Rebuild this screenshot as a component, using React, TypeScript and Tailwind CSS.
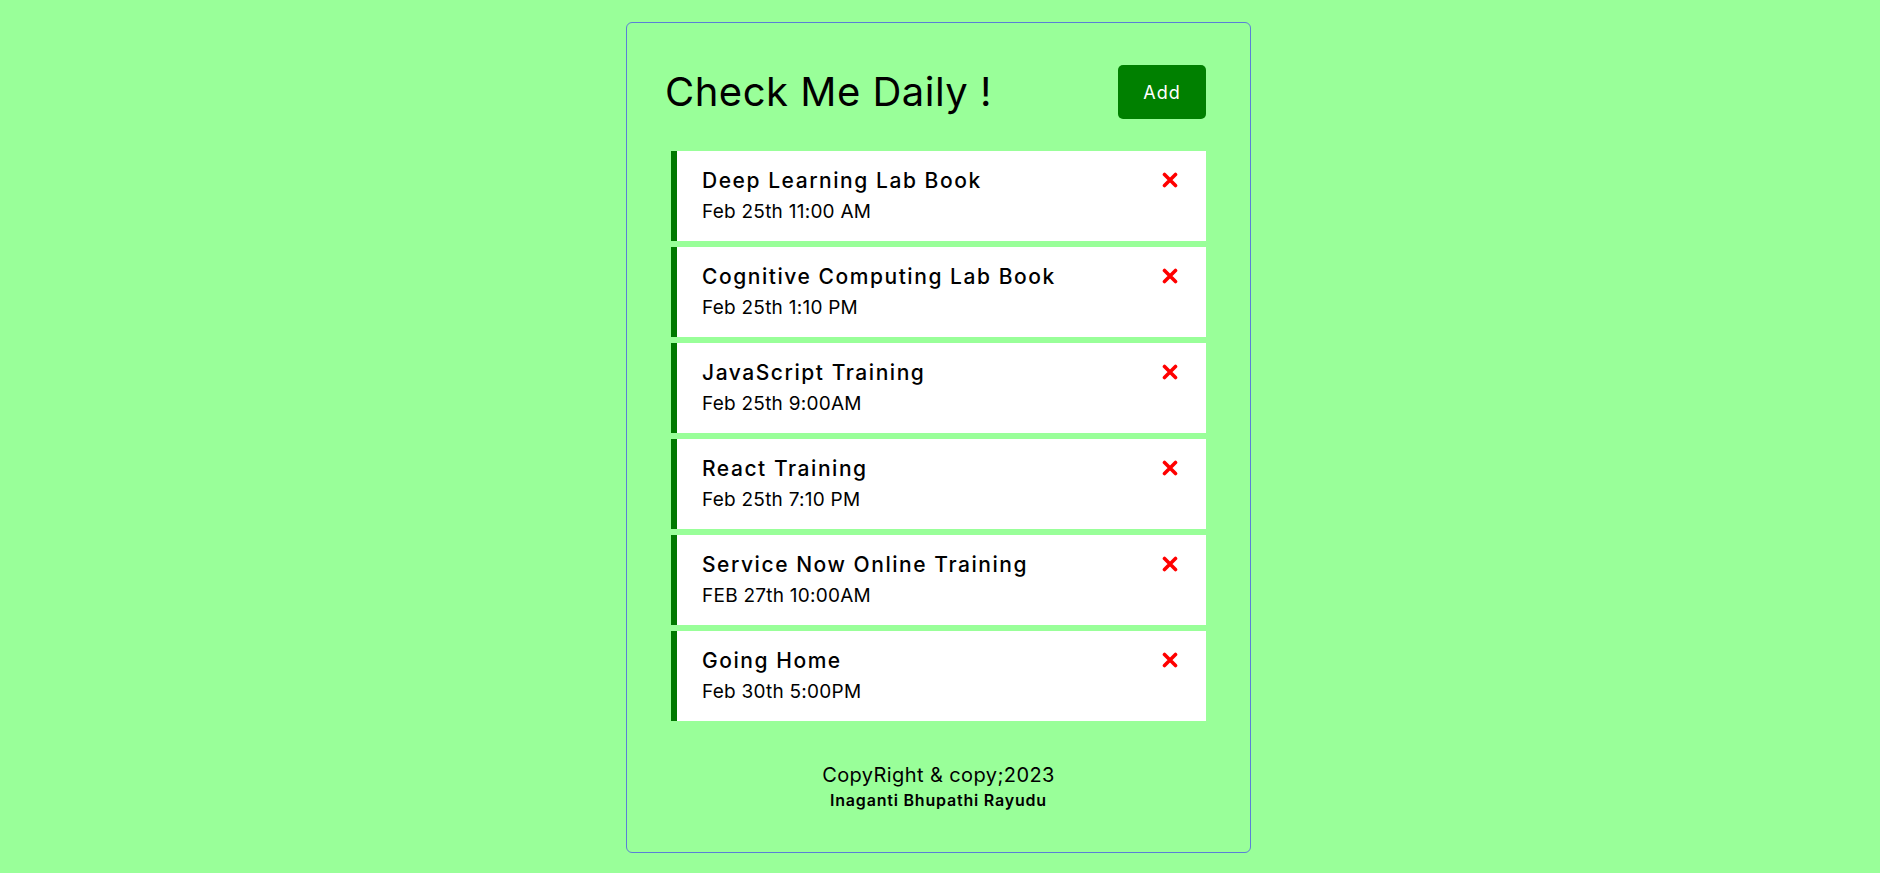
import React from "react";

const items = [
  { t: "Deep Learning Lab Book", d: "Feb 25th 11:00 AM" },
  { t: "Cognitive Computing Lab Book", d: "Feb 25th 1:10 PM" },
  { t: "JavaScript Training", d: "Feb 25th 9:00AM" },
  { t: "React Training", d: "Feb 25th 7:10 PM" },
  { t: "Service Now Online Training", d: "FEB 27th 10:00AM" },
  { t: "Going Home", d: "Feb 30th 5:00PM" },
];

function XIcon() {
  return (
    <svg width="16" height="16" viewBox="0 0 16 16" className="block">
      <path d="M2.5 2.5 L13.5 13.5 M13.5 2.5 L2.5 13.5" stroke="#ff0000" strokeWidth="3.6" strokeLinecap="round" />
    </svg>
  );
}

export default function App() {
  return (
    <div className="min-h-screen bg-[#99ff99] flex justify-center pt-[22px] pr-[3px]" style={{ fontFamily: "Inter, 'Noto Sans', sans-serif" }}>
      <div className="w-[625px] h-[831px] border border-[#5b7fd6] rounded-[6px] px-[44px] flex flex-col">
        <div className="mt-[42px] h-[54px] flex items-center justify-between">
          <h1 className="text-[40px] font-normal text-black leading-none ml-[-6px] tracking-[0.5px]">Check Me Daily !</h1>
          <button className="w-[88px] h-[54px] bg-[#008000] rounded-[5px] text-white text-[18px] font-normal tracking-[1px]">Add</button>
        </div>
        <div className="mt-[32px] flex flex-col gap-[6px]">
          {items.map((it) => (
            <div key={it.t} className="h-[90px] bg-white border-l-[6px] border-[#007a00] pl-[25px] pr-[28px] pt-[16px] flex justify-between">
              <div className="flex flex-col">
                <div className="text-[21px] font-medium leading-[28px] text-black tracking-[1.55px]">{it.t}</div>
                <div className="text-[19px] font-normal leading-[24px] text-black mt-[5px] tracking-[0.25px]">{it.d}</div>
              </div>
              <div className="pt-[5px]">
                <XIcon />
              </div>
            </div>
          ))}
        </div>
        <div className="mt-[40px] flex flex-col items-center text-black">
          <div className="text-[20px] leading-[28px] tracking-[0.4px]">CopyRight &amp; copy;2023</div>
          <div className="text-[16px] font-semibold leading-[22px] tracking-[0.8px]">Inaganti Bhupathi Rayudu</div>
        </div>
      </div>
    </div>
  );
}
